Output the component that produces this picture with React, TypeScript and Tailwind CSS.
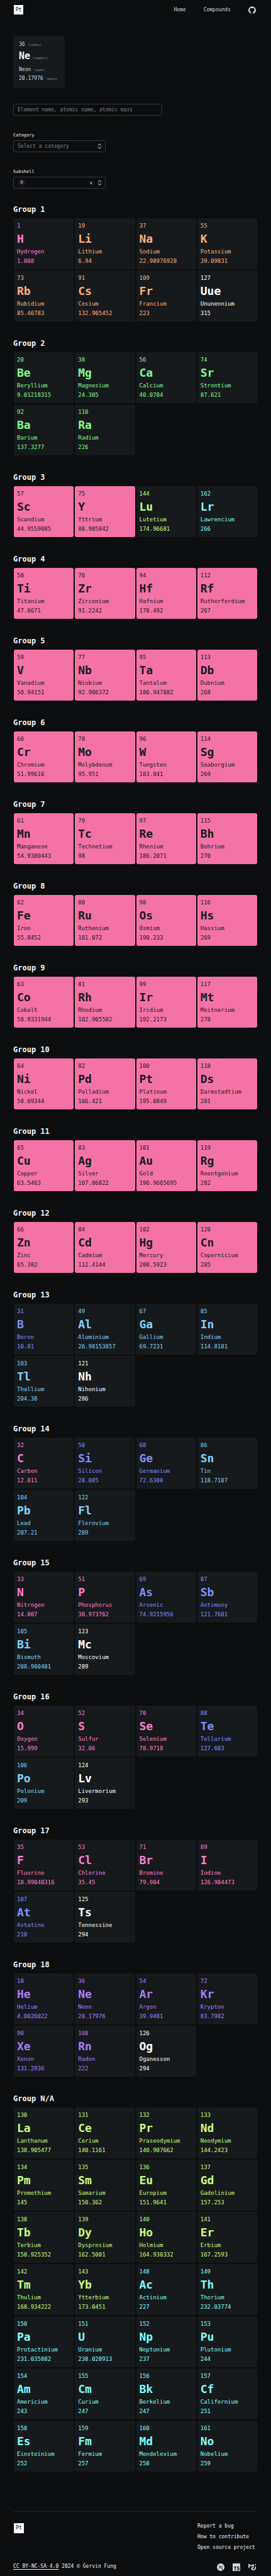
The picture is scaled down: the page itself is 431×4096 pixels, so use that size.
import { ChevronsUpDown, X } from "lucide-react";
import { SiGithub, SiMui, SiNextdotjs, SiTypescript } from "react-icons/si";

type Kind =
  | "nonmetal"
  | "alkali"
  | "alkaline"
  | "transition"
  | "lanthanide"
  | "actinide"
  | "metal"
  | "metalloid"
  | "noble"
  | "unknown";

type Item = [index: number, symbol: string, name: string, mass: string, kind: Kind];

const kindClass: Record<Kind, string> = {
  nonmetal: "bg-[#171a1c] text-[#ff7dd4]",
  alkali: "bg-[#171a1c] text-[#ffaf7d]",
  alkaline: "bg-[#171a1c] text-[#7dff8d]",
  transition: "bg-[#f472a6] text-[#171a1c]",
  lanthanide: "bg-[#171a1c] text-[#c8ff7d]",
  actinide: "bg-[#171a1c] text-[#7dffff]",
  metal: "bg-[#171a1c] text-[#7dd4ff]",
  metalloid: "bg-[#171a1c] text-[#7d8fff]",
  noble: "bg-[#171a1c] text-[#a87dff]",
  unknown: "bg-[#171a1c] text-white",
};

const groups: { title: string; items: Item[] }[] = [
  {
    title: "Group 1",
    items: [
      [1, "H", "Hydrogen", "1.008", "nonmetal"],
      [19, "Li", "Lithium", "6.94", "alkali"],
      [37, "Na", "Sodium", "22.98976928", "alkali"],
      [55, "K", "Potassium", "39.09831", "alkali"],
      [73, "Rb", "Rubidium", "85.46783", "alkali"],
      [91, "Cs", "Cesium", "132.905452", "alkali"],
      [109, "Fr", "Francium", "223", "alkali"],
      [127, "Uue", "Ununennium", "315", "unknown"],
    ],
  },
  {
    title: "Group 2",
    items: [
      [20, "Be", "Beryllium", "9.01218315", "alkaline"],
      [38, "Mg", "Magnesium", "24.305", "alkaline"],
      [56, "Ca", "Calcium", "40.0784", "alkaline"],
      [74, "Sr", "Strontium", "87.621", "alkaline"],
      [92, "Ba", "Barium", "137.3277", "alkaline"],
      [110, "Ra", "Radium", "226", "alkaline"],
    ],
  },
  {
    title: "Group 3",
    items: [
      [57, "Sc", "Scandium", "44.9559085", "transition"],
      [75, "Y", "Yttrium", "88.905842", "transition"],
      [144, "Lu", "Lutetium", "174.96681", "lanthanide"],
      [162, "Lr", "Lawrencium", "266", "actinide"],
    ],
  },
  {
    title: "Group 4",
    items: [
      [58, "Ti", "Titanium", "47.8671", "transition"],
      [76, "Zr", "Zirconium", "91.2242", "transition"],
      [94, "Hf", "Hafnium", "178.492", "transition"],
      [112, "Rf", "Rutherfordium", "267", "transition"],
    ],
  },
  {
    title: "Group 5",
    items: [
      [59, "V", "Vanadium", "50.94151", "transition"],
      [77, "Nb", "Niobium", "92.906372", "transition"],
      [95, "Ta", "Tantalum", "180.947882", "transition"],
      [113, "Db", "Dubnium", "268", "transition"],
    ],
  },
  {
    title: "Group 6",
    items: [
      [60, "Cr", "Chromium", "51.99616", "transition"],
      [78, "Mo", "Molybdenum", "95.951", "transition"],
      [96, "W", "Tungsten", "183.841", "transition"],
      [114, "Sg", "Seaborgium", "269", "transition"],
    ],
  },
  {
    title: "Group 7",
    items: [
      [61, "Mn", "Manganese", "54.9380443", "transition"],
      [79, "Tc", "Technetium", "98", "transition"],
      [97, "Re", "Rhenium", "186.2071", "transition"],
      [115, "Bh", "Bohrium", "270", "transition"],
    ],
  },
  {
    title: "Group 8",
    items: [
      [62, "Fe", "Iron", "55.8452", "transition"],
      [80, "Ru", "Ruthenium", "101.072", "transition"],
      [98, "Os", "Osmium", "190.233", "transition"],
      [116, "Hs", "Hassium", "269", "transition"],
    ],
  },
  {
    title: "Group 9",
    items: [
      [63, "Co", "Cobalt", "58.9331944", "transition"],
      [81, "Rh", "Rhodium", "102.905502", "transition"],
      [99, "Ir", "Iridium", "192.2173", "transition"],
      [117, "Mt", "Meitnerium", "278", "transition"],
    ],
  },
  {
    title: "Group 10",
    items: [
      [64, "Ni", "Nickel", "58.69344", "transition"],
      [82, "Pd", "Palladium", "106.421", "transition"],
      [100, "Pt", "Platinum", "195.0849", "transition"],
      [118, "Ds", "Darmstadtium", "281", "transition"],
    ],
  },
  {
    title: "Group 11",
    items: [
      [65, "Cu", "Copper", "63.5463", "transition"],
      [83, "Ag", "Silver", "107.86822", "transition"],
      [101, "Au", "Gold", "196.9665695", "transition"],
      [119, "Rg", "Roentgenium", "282", "transition"],
    ],
  },
  {
    title: "Group 12",
    items: [
      [66, "Zn", "Zinc", "65.382", "transition"],
      [84, "Cd", "Cadmium", "112.4144", "transition"],
      [102, "Hg", "Mercury", "200.5923", "transition"],
      [120, "Cn", "Copernicium", "285", "transition"],
    ],
  },
  {
    title: "Group 13",
    items: [
      [31, "B", "Boron", "10.81", "metalloid"],
      [49, "Al", "Aluminium", "26.98153857", "metal"],
      [67, "Ga", "Gallium", "69.7231", "metal"],
      [85, "In", "Indium", "114.8181", "metal"],
      [103, "Tl", "Thallium", "204.38", "metal"],
      [121, "Nh", "Nihonium", "286", "unknown"],
    ],
  },
  {
    title: "Group 14",
    items: [
      [32, "C", "Carbon", "12.011", "nonmetal"],
      [50, "Si", "Silicon", "28.085", "metalloid"],
      [68, "Ge", "Germanium", "72.6308", "metalloid"],
      [86, "Sn", "Tin", "118.7107", "metal"],
      [104, "Pb", "Lead", "207.21", "metal"],
      [122, "Fl", "Flerovium", "289", "metal"],
    ],
  },
  {
    title: "Group 15",
    items: [
      [33, "N", "Nitrogen", "14.007", "nonmetal"],
      [51, "P", "Phosphorus", "30.973762", "nonmetal"],
      [69, "As", "Arsenic", "74.9215956", "metalloid"],
      [87, "Sb", "Antimony", "121.7601", "metalloid"],
      [105, "Bi", "Bismuth", "208.980401", "metal"],
      [123, "Mc", "Moscovium", "289", "unknown"],
    ],
  },
  {
    title: "Group 16",
    items: [
      [34, "O", "Oxygen", "15.999", "nonmetal"],
      [52, "S", "Sulfur", "32.06", "nonmetal"],
      [70, "Se", "Selenium", "78.9718", "nonmetal"],
      [88, "Te", "Tellurium", "127.603", "metalloid"],
      [106, "Po", "Polonium", "209", "metal"],
      [124, "Lv", "Livermorium", "293", "unknown"],
    ],
  },
  {
    title: "Group 17",
    items: [
      [35, "F", "Fluorine", "18.99840316", "nonmetal"],
      [53, "Cl", "Chlorine", "35.45", "nonmetal"],
      [71, "Br", "Bromine", "79.904", "nonmetal"],
      [89, "I", "Iodine", "126.904473", "nonmetal"],
      [107, "At", "Astatine", "210", "metalloid"],
      [125, "Ts", "Tennessine", "294", "unknown"],
    ],
  },
  {
    title: "Group 18",
    items: [
      [18, "He", "Helium", "4.0026022", "noble"],
      [36, "Ne", "Neon", "20.17976", "noble"],
      [54, "Ar", "Argon", "39.9481", "noble"],
      [72, "Kr", "Krypton", "83.7982", "noble"],
      [90, "Xe", "Xenon", "131.2936", "noble"],
      [108, "Rn", "Radon", "222", "noble"],
      [126, "Og", "Oganesson", "294", "unknown"],
    ],
  },
  {
    title: "Group N/A",
    items: [
      [130, "La", "Lanthanum", "138.905477", "lanthanide"],
      [131, "Ce", "Cerium", "140.1161", "lanthanide"],
      [132, "Pr", "Praseodymium", "140.907662", "lanthanide"],
      [133, "Nd", "Neodymium", "144.2423", "lanthanide"],
      [134, "Pm", "Promethium", "145", "lanthanide"],
      [135, "Sm", "Samarium", "150.362", "lanthanide"],
      [136, "Eu", "Europium", "151.9641", "lanthanide"],
      [137, "Gd", "Gadolinium", "157.253", "lanthanide"],
      [138, "Tb", "Terbium", "158.925352", "lanthanide"],
      [139, "Dy", "Dysprosium", "162.5001", "lanthanide"],
      [140, "Ho", "Holmium", "164.930332", "lanthanide"],
      [141, "Er", "Erbium", "167.2593", "lanthanide"],
      [142, "Tm", "Thulium", "168.934222", "lanthanide"],
      [143, "Yb", "Ytterbium", "173.0451", "lanthanide"],
      [148, "Ac", "Actinium", "227", "actinide"],
      [149, "Th", "Thorium", "232.03774", "actinide"],
      [150, "Pa", "Protactinium", "231.035882", "actinide"],
      [151, "U", "Uranium", "238.028913", "actinide"],
      [152, "Np", "Neptunium", "237", "actinide"],
      [153, "Pu", "Plutonium", "244", "actinide"],
      [154, "Am", "Americium", "243", "actinide"],
      [155, "Cm", "Curium", "247", "actinide"],
      [156, "Bk", "Berkelium", "247", "actinide"],
      [157, "Cf", "Californium", "251", "actinide"],
      [158, "Es", "Einsteinium", "252", "actinide"],
      [159, "Fm", "Fermium", "257", "actinide"],
      [160, "Md", "Mendelevium", "258", "actinide"],
      [161, "No", "Nobelium", "259", "actinide"],
    ],
  },
];

function ElementCard({ item }: { item: Item }) {
  const [index, symbol, name, mass, kind] = item;
  return (
    <a
      href={`#${symbol}`}
      className={`block min-w-0 rounded-[3px] p-[5px] text-[9px] leading-[15px] ${kindClass[kind]}`}
    >
      <p>{index}</p>
      <p className="text-[18px] leading-[26px] font-bold">{symbol}</p>
      <p>{name}</p>
      <p>{mass}</p>
    </a>
  );
}

function Hint({ children }: { children: string }) {
  return <span className="text-[5px] font-normal text-[#8b9196]">({children})</span>;
}

export default function App() {
  return (
    <div className="min-h-screen bg-[#0b0d0e] px-[21px] font-['DejaVu_Sans_Mono','Liberation_Mono',monospace] text-[8px] text-[#cdd7e1]">
      <header className="flex items-center justify-between px-px py-2">
        <a
          href="#home"
          aria-label="Periodic table"
          className="flex size-[15px] items-center justify-center bg-white leading-none text-black"
        >
          Pt
        </a>
        <nav className="flex items-center gap-7 pr-0.5">
          <a href="#home">Home</a>
          <a href="#compounds">Compounds</a>
          <a href="#github" aria-label="GitHub">
            <SiGithub className="size-3" />
          </a>
        </nav>
      </header>

      <main>
        <div className="mt-[26px] w-fit min-w-[82px] rounded-[5px] bg-[#171a1c] px-[9px] pt-[7px] pb-2 leading-[14px]">
          <p>
            36 <Hint>index</Hint>
          </p>
          <p className="flex items-baseline gap-1 text-[15px] leading-[23px] font-bold text-[#f0f4f8]">
            Ne <Hint>symbol</Hint>
          </p>
          <p>
            Neon <Hint>name</Hint>
          </p>
          <p>
            20.17976 <Hint>mass</Hint>
          </p>
        </div>

        <input
          type="search"
          aria-label="Search elements"
          placeholder="Element name, atomic name, atomic mass"
          className="mt-[25px] block h-[19px] w-[237px] max-w-full rounded-[3px] border border-[#32383e] bg-transparent px-1.5 placeholder:text-[#7d8388] placeholder:opacity-100"
        />

        <div className="mt-[25px] w-[147px]">
          <label htmlFor="category" className="block text-[7px] leading-3 font-medium text-[#f0f4f8]">
            Category
          </label>
          <div className="relative mt-0.5">
            <select
              id="category"
              className="block h-[19px] w-full appearance-none rounded-[3px] border border-[#32383e] bg-transparent px-1.5 text-[#7d8388]"
            >
              <option>Select a category</option>
            </select>
            <ChevronsUpDown
              strokeWidth={2.5}
              className="pointer-events-none absolute top-1 right-1 size-[11px] text-[#9fa6ad]"
            />
          </div>
        </div>

        <div className="mt-[25px] w-[147px]">
          <label htmlFor="subshell" className="block text-[7px] leading-3 font-medium text-[#f0f4f8]">
            Subshell
          </label>
          <div className="mt-0.5 flex h-[19px] items-center rounded-[3px] border border-[#32383e] pr-[3px] pl-1.5">
            <span className="flex size-[13px] items-center justify-center rounded-full bg-[#171a1c] text-[7px] leading-none font-bold text-[#f472a6]">
              D
            </span>
            <select id="subshell" className="h-full min-w-0 flex-1 appearance-none bg-transparent">
              <option aria-label="D"></option>
            </select>
            <button type="button" aria-label="Clear subshell" className="mr-1">
              <X strokeWidth={2.5} className="size-2" />
            </button>
            <ChevronsUpDown strokeWidth={2.5} className="size-[11px] text-[#9fa6ad]" />
          </div>
        </div>

        <div className="mt-6 flex flex-col gap-[26px]">
          {groups.map((group) => (
            <section key={group.title}>
              <h2 className="mb-[5px] text-[12px] leading-[18px] font-bold text-[#f0f4f8]">{group.title}</h2>
              <div className="grid grid-cols-4 gap-0.5 px-px">
                {group.items.map((item) => (
                  <ElementCard key={item[0]} item={item} />
                ))}
              </div>
            </section>
          ))}
        </div>
      </main>

      <footer className="mt-[63px] border-t border-[#1f2326] pt-3.5 pb-[11px] text-[#f0f4f8]">
        <div className="flex items-start justify-between">
          <a
            href="#home"
            aria-label="Periodic table"
            className="mt-1 ml-px flex size-4 items-center justify-center bg-white leading-none text-black"
          >
            Pt
          </a>
          <ul className="min-w-24 leading-[17px]">
            <li>
              <a href="#bug">Report a bug</a>
            </li>
            <li>
              <a href="#contribute">How to contribute</a>
            </li>
            <li>
              <a href="#source">Open source project</a>
            </li>
          </ul>
        </div>
        <div className="mt-[17px] flex items-start justify-between">
          <p className="leading-[9px]">
            <a href="#license" className="underline underline-offset-2">
              CC BY-NC-SA 4.0
            </a>{" "}
            2024 © Gervin Fung
          </p>
          <div className="flex gap-[13px] pr-[3px] text-[#cdd7e1]">
            <a href="#nextjs" aria-label="Next.js">
              <SiNextdotjs className="size-3" />
            </a>
            <a href="#typescript" aria-label="TypeScript">
              <SiTypescript className="size-3" />
            </a>
            <a href="#mui" aria-label="MUI">
              <SiMui className="size-3" />
            </a>
          </div>
        </div>
      </footer>
    </div>
  );
}
